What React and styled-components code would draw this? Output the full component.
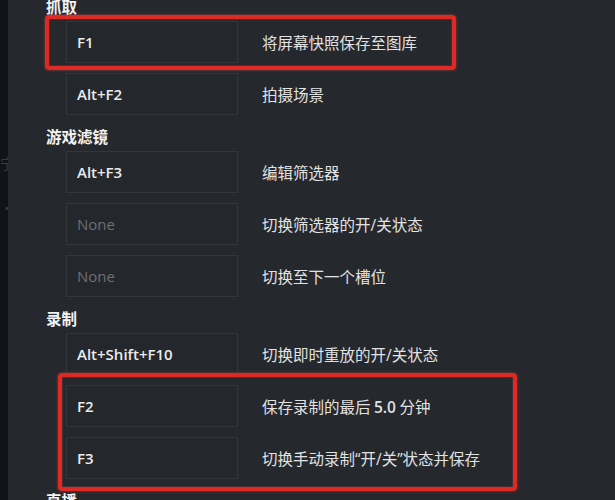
import React from 'react'
import styled, { createGlobalStyle } from 'styled-components'

const GlobalStyle = createGlobalStyle`
html, body {
  margin: 0;
  padding: 0;
  background: #25282d;
  overflow: hidden;
}
* { box-sizing: border-box; }
`

const Page = styled.div`
display: flex;
width: 615px;
height: 500px;
overflow: hidden;
background: #25282d;
font-family: "Open Sans", "Noto Sans CJK SC", sans-serif;
`

const SideStrip = styled.div`
width: 8px;
flex-shrink: 0;
background: #121316;
display: flex;
flex-direction: column;
align-items: flex-end;
overflow: hidden;
padding-top: 156px;
gap: 30px;
color: #3a3c40;
font-size: 14px;
line-height: 14px;
font-family: "Noto Sans CJK SC", sans-serif;
`

const SideGlyph = styled.span`
display: block;
margin-right: -6px;
`

const Content = styled.div`
flex: 1;
display: flex;
flex-direction: column;
gap: 11px;
margin-top: -4px;
padding-left: 38px;
`

const Section = styled.div`
display: flex;
flex-direction: column;
gap: 10px;
`

const Heading = styled.div`
height: 20px;
line-height: 20px;
margin-bottom: -5px;
font-size: 15.5px;
font-weight: 700;
color: #f2f2f2;
font-family: "Noto Sans CJK SC", sans-serif;
`

const Rows = styled.div`
display: flex;
flex-direction: column;
gap: 10px;
padding-left: 20px;
`

const Frame = styled.div`
position: relative;
display: flex;
flex-direction: column;
gap: 10px;

&::after {
  content: '';
  position: absolute;
  top: ${p => p.$top}px;
  bottom: ${p => p.$bottom}px;
  left: ${p => p.$left}px;
  width: ${p => p.$width}px;
  border: 4px solid #de2a24;
  border-radius: 4px;
  box-shadow: 0 0 3px rgba(255, 70, 60, 0.55), inset 0 0 2px rgba(255, 90, 80, 0.5);
  pointer-events: none;
}
`

const Row = styled.div`
display: flex;
align-items: center;
gap: 24px;
`

const KeyBox = styled.div`
width: 172px;
height: 42px;
flex-shrink: 0;
display: flex;
align-items: center;
padding-left: 10px;
background: #24272c;
border: 1px solid #32353a;
font-size: 15px;
color: ${p => (p.$empty ? '#6c6f74' : '#ebebeb')};
font-weight: ${p => (p.$empty ? 400 : 600)};
`

const Desc = styled.div`
font-size: 15.5px;
color: #e2e2e2;
font-family: "Noto Sans CJK SC", sans-serif;
white-space: nowrap;
`

const Latin = styled.span`
font-family: "Open Sans", sans-serif;
font-weight: ${p => (p.$bold ? 600 : 400)};
`

const Shortcut = ({ keys, children }) => (
  <Row>
    <KeyBox $empty={!keys}>{keys || 'None'}</KeyBox>
    <Desc>{children}</Desc>
  </Row>
)

const App = () => (
  <>
    <GlobalStyle />
    <Page>
      <SideStrip>
        <SideGlyph>宁</SideGlyph>
        <SideGlyph>·</SideGlyph>
      </SideStrip>
      <Content>
        <Section>
          <Heading>抓取</Heading>
          <Rows>
            <Frame $top={-6} $bottom={-7} $left={-21} $width={403}>
              <Shortcut keys="F1">将屏幕快照保存至图库</Shortcut>
            </Frame>
            <Shortcut keys="Alt+F2">拍摄场景</Shortcut>
          </Rows>
        </Section>
        <Section>
          <Heading>游戏滤镜</Heading>
          <Rows>
            <Shortcut keys="Alt+F3">编辑筛选器</Shortcut>
            <Shortcut>切换筛选器的开<Latin>/</Latin>关状态</Shortcut>
            <Shortcut>切换至下一个槽位</Shortcut>
          </Rows>
        </Section>
        <Section>
          <Heading>录制</Heading>
          <Rows>
            <Shortcut keys="Alt+Shift+F10">切换即时重放的开<Latin>/</Latin>关状态</Shortcut>
            <Frame $top={-12} $bottom={-12} $left={-8} $width={451}>
              <Shortcut keys="F2">保存录制的最后 <Latin $bold>5.0</Latin> 分钟</Shortcut>
              <Shortcut keys="F3">
                切换手动录制<Latin>“</Latin>开<Latin>/</Latin>关<Latin>”</Latin>状态并保存
              </Shortcut>
            </Frame>
          </Rows>
        </Section>
        <Section>
          <Heading>直播</Heading>
        </Section>
      </Content>
    </Page>
  </>
)

export default App
